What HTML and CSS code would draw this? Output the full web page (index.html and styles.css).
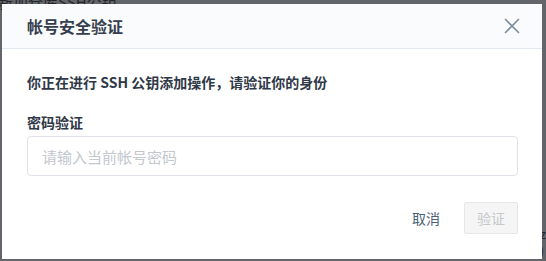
FILE: index.html
```html
<!DOCTYPE html>
<html lang="zh">
<head>
<meta charset="utf-8">
<link rel="stylesheet" href="styles.css">
</head>
<body>
<div class="page">
  <div class="page-title">新加仓库SSH公钥</div>
  <div class="page-side">z<br>)</div>
</div>
<div class="overlay">
  <div class="dialog">
    <div class="dialog-header">
      <span class="dialog-title">帐号安全验证</span>
      <button class="close" aria-label="关闭">
        <svg width="16" height="16" viewBox="0 0 16 16"><path d="M1 1 L15 15 M15 1 L1 15" stroke="#7d8e9b" stroke-width="1.6" fill="none"/></svg>
      </button>
    </div>
    <div class="dialog-body">
      <p class="notice">你正在进行 SSH 公钥添加操作，请验证你的身份</p>
      <label class="field-label">密码验证</label>
      <input class="field-input" type="password" placeholder="请输入当前帐号密码">
    </div>
    <div class="dialog-footer">
      <button class="btn-cancel">取消</button>
      <button class="btn-verify" disabled>验证</button>
    </div>
  </div>
</div>
</body>
</html>
```
FILE: styles.css
```css
html, body {
  margin: 0;
  padding: 0;
}
body {
  width: 546px;
  height: 261px;
  overflow: hidden;
  font-family: "Noto Sans CJK SC", "Liberation Sans", sans-serif;
  background: #f3f4f6;
}
.page {
  height: 261px;
  display: flex;
  justify-content: space-between;
}
.page-title {
  margin-top: -9px;
  margin-left: -2px;
  font-size: 15px;
  color: #333;
}
.page-side {
  margin-top: 225px;
  font-size: 13px;
  color: #333;
  line-height: 17px;
}
.overlay {
  position: fixed;
  inset: 0;
  background: rgba(30, 33, 40, 0.68);
  padding: 4px 0 0 2px;
}
.dialog {
  width: 540px;
  height: 255px;
  background: #fff;
  box-sizing: border-box;
  display: flex;
  flex-direction: column;
}
.dialog-header {
  height: 45px;
  box-sizing: border-box;
  background: #fafbfc;
  border-bottom: 1px solid #e4e9ef;
  display: flex;
  align-items: center;
  justify-content: space-between;
  padding: 0 22px 1px 25px;
}
.dialog-title {
  font-size: 16px;
  font-weight: 700;
  color: #363f4e;
}
.close {
  border: 0;
  background: none;
  padding: 0;
  width: 16px;
  height: 16px;
  display: flex;
}
.dialog-body {
  padding: 23px 24px 0 25px;
  display: flex;
  flex-direction: column;
}
.notice {
  margin: 0;
  font-size: 14px;
  line-height: 20px;
  font-weight: 700;
  color: #2f3847;
}
.field-label {
  margin-top: 20px;
  font-size: 14px;
  line-height: 20px;
  font-weight: 700;
  color: #2f3847;
}
.field-input {
  margin-top: 4px;
  height: 40px;
  box-sizing: border-box;
  border: 1px solid #dfe2e8;
  border-radius: 4px;
  padding: 0 14px;
  font-family: "Noto Sans CJK SC", "Liberation Sans", sans-serif;
  font-size: 15px;
  outline: none;
}
.field-input::placeholder {
  color: #c3c7ce;
}
.dialog-footer {
  margin-top: 26px;
  padding: 0 24px 0 0;
  display: flex;
  justify-content: flex-end;
  gap: 12px;
}
.btn-cancel {
  height: 32px;
  padding: 0 12px;
  border: 0;
  background: none;
  font-family: "Noto Sans CJK SC", "Liberation Sans", sans-serif;
  font-size: 14px;
  color: #4b6374;
}
.btn-verify {
  width: 54px;
  height: 32px;
  box-sizing: border-box;
  border: 1px solid #e6e6e6;
  border-radius: 2px;
  background: #f5f5f5;
  font-family: "Noto Sans CJK SC", "Liberation Sans", sans-serif;
  font-size: 14px;
  color: #c5c8cc;
}
```
